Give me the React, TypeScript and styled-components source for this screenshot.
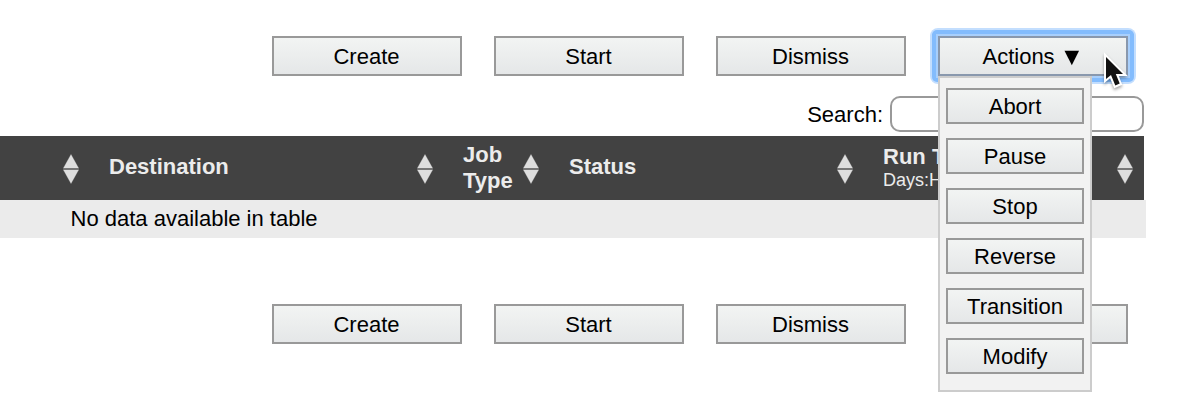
import React from "react";
import styled, { createGlobalStyle } from "styled-components";

const GlobalStyle = createGlobalStyle`
  * { box-sizing: border-box; }
  body {
    margin: 0;
    background: #fff;
    color: #000;
    font: 22px/25px "Liberation Sans", Arial, Helvetica, sans-serif;
    overflow: hidden;
  }
`;

const Page = styled.main`
  width: 1204px;
  height: 408px;
  padding-top: 36px;
  overflow: hidden;
`;

const Toolbar = styled.div`
  display: flex;
  gap: 32px;
  padding-left: 272px;
`;

const Button = styled.button<{ $small?: boolean }>`
  display: block;
  width: ${(p) => (p.$small ? 138 : 190)}px;
  height: ${(p) => (p.$small ? 36 : 40)}px;
  padding: 1px ${(p) => (p.$small ? 0 : 1)}px 0 0;
  border: 2px solid #999;
  border-radius: 0;
  background: linear-gradient(#f2f4f3, #e5e7e8);
  color: #000;
  font: inherit;
  text-align: center;
  white-space: nowrap;
`;

const Arrow = styled.span`
  display: inline-block;
  transform: scale(1.13);
`;

const FocusFrame = styled.div`
  position: relative;
  &::before {
    content: "";
    position: absolute;
    inset: -8px;
    border-radius: 8px;
    background: #c3defe;
  }
  &::after {
    content: "";
    position: absolute;
    inset: -6px;
    border-radius: 5px;
    background: #83bcfd;
  }
  > * { z-index: 1; }
  > button {
    position: relative;
    border-color: #8998ad;
    box-shadow: 0 0 0 2px #a8cffc;
  }
`;

const Menu = styled.div`
  position: absolute;
  z-index: 2;
  top: 40px;
  left: 0;
  width: 154px;
  height: 316px;
  padding: 10px 6px;
  display: flex;
  flex-direction: column;
  gap: 14px;
  border: 2px solid #ccc;
  background: #f2f2f2;
`;

const Pointer = styled.svg`
  position: absolute;
  z-index: 3;
  left: 160px;
  top: 12px;
  overflow: visible;
  filter: drop-shadow(0 2px 1.5px rgba(0, 0, 0, 0.35));
`;

const SearchRow = styled.label`
  display: flex;
  align-items: center;
  justify-content: flex-end;
  gap: 7px;
  width: 1144px;
  height: 36px;
  margin: 20px 0 4px;
`;

const SearchText = styled.span`
  margin-top: 1px;
`;

const SearchInput = styled.input`
  width: 254px;
  height: 36px;
  border: 2px solid #999;
  border-radius: 10px;
  background: #fff;
  font: inherit;
`;

const HeaderRow = styled.div`
  display: grid;
  grid-template-columns: 89px 354px 106px 314px 281px;
  width: 1144px;
  height: 64px;
  background: #424242;
  color: #ececec;
  font-weight: bold;
`;

const HeaderCell = styled.div<{ $pad?: number }>`
  display: flex;
  align-items: center;
  justify-content: space-between;
  padding: 0 ${(p) => p.$pad ?? 9}px 0 20px;
`;

const HeaderLabel = styled.span<{ $shift?: number }>`
  display: grid;
  gap: 1px;
  margin-top: ${(p) => p.$shift ?? -3}px;
  white-space: nowrap;
`;

const Hint = styled.small`
  font-size: 18px;
  font-weight: normal;
  line-height: 20px;
`;

const SortSvg = styled.svg`
  flex: none;
  margin-top: 2px;
`;

const EmptyRow = styled.div`
  width: 1146px;
  height: 38px;
  margin-bottom: 66px;
  padding: 6px 0 0 70.5px;
  background: #ebebeb;
`;

const SortIcon = () => (
  <SortSvg width="18" height="32" viewBox="0 0 18 32">
    <path d="M1 15h16v2H1Z" fill="#666" />
    <path d="M9 1.5 16.5 15h-15Z M1.5 17h15L9 30.5Z" fill="#dedede" stroke="#dedede" strokeOpacity=".3" />
  </SortSvg>
);

const menuItems = ["Abort", "Pause", "Stop", "Reverse", "Transition", "Modify"];

export default function App() {
  return (
    <Page>
      <GlobalStyle />
      <Toolbar>
        <Button>Create</Button>
        <Button>Start</Button>
        <Button>Dismiss</Button>
        <FocusFrame>
          <Button>Actions <Arrow>▼</Arrow></Button>
          <Menu>
            {menuItems.map((item) => (
              <Button $small key={item}>{item}</Button>
            ))}
          </Menu>
          <Pointer width="30" height="42" viewBox="0 0 30 42">
            <path
              d="M8 9V31L13 27l4.3 10.5 4.4-1.9L17.8 26H25Z"
              fill="#111"
              stroke="#fff"
              strokeWidth="4"
              paintOrder="stroke"
            />
          </Pointer>
        </FocusFrame>
      </Toolbar>
      <SearchRow>
        <SearchText>Search:</SearchText>
        <SearchInput />
      </SearchRow>
      <HeaderRow>
        <HeaderCell><span /><SortIcon /></HeaderCell>
        <HeaderCell><HeaderLabel>Destination</HeaderLabel><SortIcon /></HeaderCell>
        <HeaderCell>
          <HeaderLabel $shift={-1}><span>Job</span><span>Type</span></HeaderLabel>
          <SortIcon />
        </HeaderCell>
        <HeaderCell><HeaderLabel>Status</HeaderLabel><SortIcon /></HeaderCell>
        <HeaderCell $pad={10}>
          <HeaderLabel $shift={-2}><span>Run Time</span><Hint>Days:H:M:S</Hint></HeaderLabel>
          <SortIcon />
        </HeaderCell>
      </HeaderRow>
      <EmptyRow>No data available in table</EmptyRow>
      <Toolbar>
        <Button>Create</Button>
        <Button>Start</Button>
        <Button>Dismiss</Button>
        <Button>Actions <Arrow>▼</Arrow></Button>
      </Toolbar>
    </Page>
  );
}
